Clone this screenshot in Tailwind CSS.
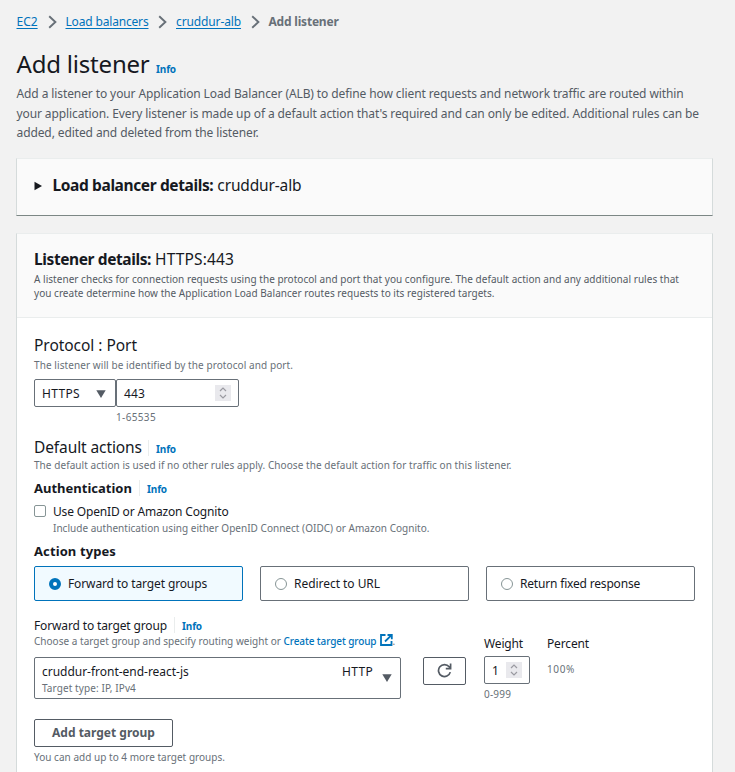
<!DOCTYPE html>
<html lang="en">
<head>
<meta charset="utf-8">
<title>Add listener</title>
<script src="https://cdn.jsdelivr.net/npm/@tailwindcss/browser@4"></script>
</head>
<body class="h-[772px] overflow-hidden bg-[#f2f2f2] font-['Noto_Sans',sans-serif] text-[12px] whitespace-nowrap text-[#16191f]">
<div class="ml-4 w-[697px]">
  <nav class="flex h-[32px] items-center pt-[12px] pl-[0.5px] text-[#0073bb]">
    <a class="w-[21px] underline underline-offset-[1.5px]">EC2</a>
    <svg class="mr-[9px] ml-[10px] h-[14px] w-[9px]" viewBox="0 0 9 14" fill="none" stroke="#687078" stroke-width="1.9"><path d="M1.2 1.2 7.4 7 1.2 12.8"/></svg>
    <a class="w-[83px] tracking-[-0.17px] underline underline-offset-[1.5px]">Load balancers</a>
    <svg class="mr-[9px] ml-[9.5px] h-[14px] w-[9px]" viewBox="0 0 9 14" fill="none" stroke="#687078" stroke-width="1.9"><path d="M1.2 1.2 7.4 7 1.2 12.8"/></svg>
    <a class="w-[65px] tracking-[-0.12px] underline underline-offset-[1.5px]">cruddur-alb</a>
    <svg class="mr-[9px] ml-[9.5px] h-[14px] w-[9px]" viewBox="0 0 9 14" fill="none" stroke="#687078" stroke-width="1.9"><path d="M1.2 1.2 7.4 7 1.2 12.8"/></svg>
    <span class="font-bold tracking-[-0.2px] text-[#687078]">Add listener</span>
  </nav>

  <div class="mt-4 flex h-8 items-baseline pl-[0.5px] text-[24px] leading-8">
    <h1 class="w-[139.5px] tracking-[-0.2px]">Add listener</h1>
    <a class="text-[10px] font-bold tracking-[-0.13px] text-[#0073bb]">Info</a>
  </div>
  <p class="mt-[4px] pl-[0.5px] leading-[19.5px] tracking-[-0.1px] text-[#545b64]">Add a listener to your Application Load Balancer (ALB) to define how client requests and network traffic are routed within<br>your application. Every listener is made up of a default action that's required and can only be edited. Additional rules can be<br>added, edited and deleted from the listener.</p>

  <section class="mt-[15.5px] flex h-[58px] items-center border border-[#d5dbdb] border-t-[#eaeded] border-b-[#7c8785] bg-[#fafafa] pb-[3px] pl-[17px] text-[15.5px]">
    <svg class="mr-[10.5px] h-[10px] w-2" viewBox="0 0 8 10"><path d="M.5.8v8.4L8 5z" fill="#16191f"/></svg>
    <h2><span class="font-bold tracking-[-0.38px]">Load balancer details:</span> <span class="tracking-[-0.15px]">cruddur-alb</span></h2>
  </section>

  <section class="mt-[17px] h-[539px] border border-b-0 border-[#d5dbdb] border-t-[#eaeded] bg-white">
    <header class="h-[84px] border-b border-[#eaeded] bg-[#fafafa] px-[17px] pt-[15px]">
      <h2 class="text-[15.5px] leading-5"><span class="font-bold tracking-[-0.4px]">Listener details:</span> <span class="tracking-[0.14px]">HTTPS:443</span></h2>
      <p class="mt-[3px] text-[10px] leading-[14px] tracking-[0.035px] text-[#545b64]">A listener checks for connection requests using the protocol and port that you configure. The default action and any additional rules that<br>you create determine how the Application Load Balancer routes requests to its registered targets.</p>
    </header>

    <div class="px-[17px] pt-[17px]">
      <h3 class="text-[15.5px] leading-5 tracking-[-0.04px]">Protocol : Port</h3>
      <p class="mt-[3px] text-[10px] leading-[14px] tracking-[0.085px] text-[#687078]">The listener will be identified by the protocol and port.</p>
      <div class="mt-[7px] flex h-7">
        <div class="flex w-[82px] items-center justify-between rounded-[2px] border border-[#687078] pt-px pr-[9px] pl-[7px]">
          <span class="tracking-[0.33px]">HTTPS</span>
          <svg class="h-2 w-[10px]" viewBox="0 0 10 8"><path d="M.3.3h9.4L5 7.9z" fill="#545b64"/></svg>
        </div>
        <div class="flex w-[123px] items-center justify-between rounded-[2px] border border-[#687078] pr-[7px] pl-[7px]">
          <span class="pt-px tracking-[0.13px]">443</span>
          <svg class="h-4 w-4" viewBox="0 0 16 16" fill="none" stroke="#9a9aa1" stroke-width="1.2"><path d="M0 0h16v16H0z" fill="#e9e9ed" stroke="none"/><path d="m5 6 3-3 3 3M5 10l3 3 3-3"/></svg>
        </div>
      </div>
      <p class="mt-[3px] ml-[82px] text-[10px] leading-[14px] tracking-[0.35px] text-[#687078]">1-65535</p>

      <div class="mt-[13px] flex h-5 items-center text-[15.5px] leading-5">
        <h3 class="w-[114px] tracking-[-0.1px]">Default actions</h3>
        <a class="mt-px h-4 border-l border-[#eaeded] pl-[7px] text-[10px] leading-[19px] font-bold tracking-[-0.13px] text-[#0073bb]">Info</a>
      </div>
      <p class="mt-px text-[10px] leading-[14px] tracking-[0.065px] text-[#687078]">The default action is used if no other rules apply. Choose the default action for traffic on this listener.</p>
      <div class="mt-[6px] flex h-5 items-center text-[13px] leading-5">
        <h4 class="w-[105px] font-bold">Authentication</h4>
        <a class="h-4 border-l border-[#eaeded] pl-[7px] text-[10px] leading-[18px] font-bold tracking-[-0.13px] text-[#0073bb]">Info</a>
      </div>
      <label class="mt-[3px] flex h-5 items-center gap-[7px]">
        <span class="h-3 w-3 rounded-[2px] border border-[#879596]"></span>
        <span class="pt-[2px] tracking-[-0.16px]">Use OpenID or Amazon Cognito</span>
      </label>
      <p class="ml-[19px] text-[10px] leading-[14px] tracking-[0.025px] text-[#687078]">Include authentication using either OpenID Connect (OIDC) or Amazon Cognito.</p>

      <h4 class="mt-[6px] text-[13px] leading-5 font-bold tracking-[0.1px]">Action types</h4>
      <div class="mt-[5px] grid h-[35px] w-[661px] grid-cols-3 gap-[17px]">
        <label class="flex items-center gap-[7px] rounded-[2px] border border-[#0073bb] bg-[#f1faff] pl-[14px]">
          <span class="h-3 w-3 rounded-full border-4 border-[#0073bb] bg-white"></span>
          <span class="pt-px tracking-[-0.12px]">Forward to target groups</span>
        </label>
        <label class="flex items-center gap-[7px] rounded-[2px] border border-[#687078] pl-[14px]">
          <span class="h-3 w-3 rounded-full border border-[#879596]"></span>
          <span class="pt-px tracking-[-0.04px]">Redirect to URL</span>
        </label>
        <label class="flex items-center gap-[7px] rounded-[2px] border border-[#687078] pl-[14px]">
          <span class="h-3 w-3 rounded-full border border-[#879596]"></span>
          <span class="pt-px tracking-[-0.18px]">Return fixed response</span>
        </label>
      </div>

      <div class="mt-[14px] flex">
        <div class="w-[367px]">
          <div class="flex h-[19px] items-center leading-[19px]">
            <h5 class="w-[140px] pt-px tracking-[-0.14px]">Forward to target group</h5>
            <a class="h-4 border-l border-[#eaeded] pl-[7px] text-[10px] leading-[18px] font-bold tracking-[-0.13px] text-[#0073bb]">Info</a>
          </div>
          <p class="flex h-[14px] items-center text-[10px] leading-[14px] text-[#687078]"><span class="w-[249.5px] tracking-[0.02px]">Choose a target group and specify routing weight or</span><a class="w-[96px] font-medium tracking-[-0.1px] text-[#0073bb]">Create target group</a><svg class="mt-[-2px] h-3 w-[13px]" viewBox="0 0 13 12" fill="none" stroke="#0073bb" stroke-width="1.8"><path d="M5.5 1H1v10h10.5V7M7.5 1h4.3v4.3M11.5 1.2 5 7.5"/></svg><span>.</span></p>
          <div class="mt-[9px] flex h-[42px] rounded-[2px] border border-[#687078] pt-[5px] pr-[8px] pl-[7px]">
            <div class="grow">
              <p class="leading-[18px] tracking-[-0.02px]">cruddur-front-end-react-js</p>
              <p class="text-[10px] leading-[14px] tracking-[0.1px] text-[#687078]">Target type: IP, IPv4</p>
            </div>
            <span class="leading-[18px] tracking-[0.31px]">HTTP</span>
            <svg class="mt-[11px] ml-[9px] h-2 w-[10px]" viewBox="0 0 10 8"><path d="M.3.3h9.4L5 7.9z" fill="#545b64"/></svg>
          </div>
        </div>
        <div class="mt-[42px] ml-[22px] flex h-7 w-[43px] items-center justify-center rounded-[2px] border border-[#545b64]">
          <svg class="mb-px h-[15px] w-[15px]" viewBox="0 0 15 15" fill="none" stroke="#545b64" stroke-width="1.7"><path d="M13.3 9.1A6 6 0 1 1 12.2 3.8L13.6 5.4M13.6.6v5H8.8"/></svg>
        </div>
        <div class="mt-[18px] ml-[18px] w-[46px]">
          <h5 class="h-5 pt-px leading-5 tracking-[-0.15px]">Weight</h5>
          <div class="mt-[3px] flex h-7 items-center justify-between rounded-[2px] border border-[#687078] pr-[7px] pl-[7px]">
            <span class="pt-px">1</span>
            <svg class="h-4 w-4" viewBox="0 0 16 16" fill="none" stroke="#9a9aa1" stroke-width="1.2"><path d="M0 0h16v16H0z" fill="#e9e9ed" stroke="none"/><path d="m5 6 3-3 3 3M5 10l3 3 3-3"/></svg>
          </div>
          <p class="mt-[3px] text-[10px] leading-[14px] tracking-[0.2px] text-[#687078]">0-999</p>
        </div>
        <div class="mt-[18px] ml-[17px]">
          <h5 class="h-5 pt-px leading-5 tracking-[-0.15px]">Percent</h5>
          <p class="mt-[9px] text-[10px] leading-[14px] tracking-[0.6px] text-[#687078]">100%</p>
        </div>
      </div>

      <button class="mt-[18px] block h-7 w-[139px] rounded-[2px] border border-[#545b64] text-[12px] font-bold text-[#545b64]">Add target group</button>
      <p class="mt-[3px] text-[10px] leading-[14px] tracking-[0.027px] text-[#687078]">You can add up to 4 more target groups.</p>
    </div>
  </section>
</div>
</body>
</html>
